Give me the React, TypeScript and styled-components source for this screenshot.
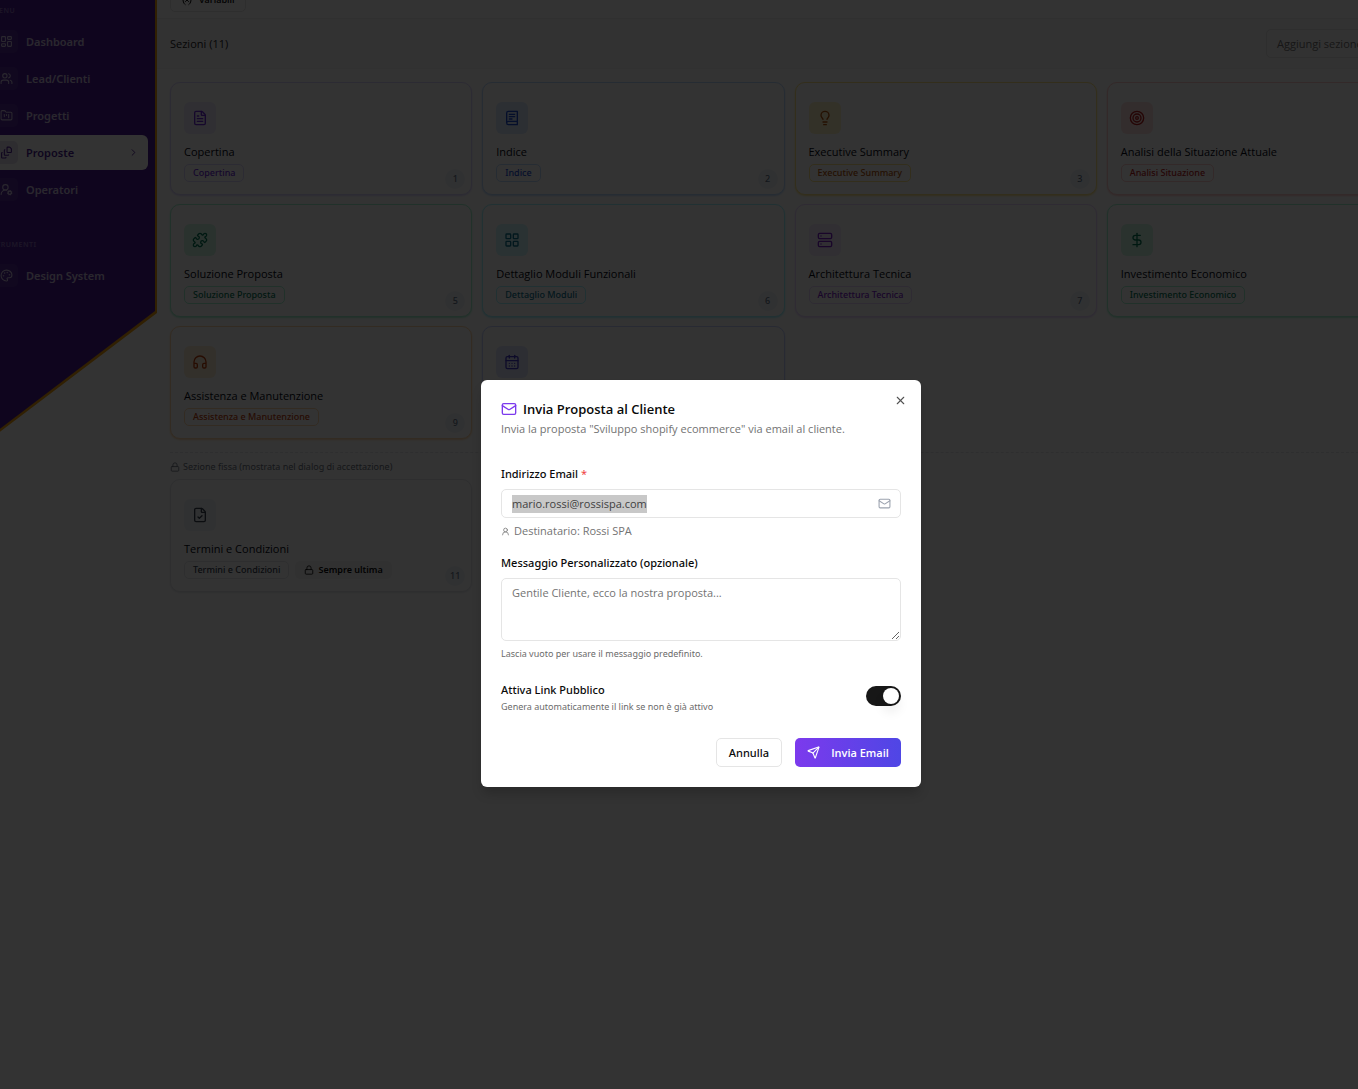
import { useEffect, useRef, useState, type ComponentType } from "react";
import styled, { createGlobalStyle } from "styled-components";
import {
  CalendarDays,
  ChevronRight,
  DollarSign,
  FileCheck,
  FileStack,
  FileText,
  FolderKanban,
  Headphones,
  LayoutDashboard,
  LayoutGrid,
  Lightbulb,
  Lock,
  Mail,
  Palette,
  Puzzle,
  Send,
  Server,
  Target,
  UserRound,
  UserRoundCog,
  Users,
  Variable,
  X,
} from "lucide-react";

const textFont = `"Segoe UI", "Open Sans", "Noto Sans", sans-serif`;
const mediumFont = `"Segoe UI", "Noto Sans", "Open Sans", sans-serif`;

const GlobalStyle = createGlobalStyle`
  *, *::before, *::after { box-sizing: border-box; }
  body {
    margin: 0;
    background: #fff;
    color: #0a0a0a;
    font-family: ${textFont};
    font-size: 11px;
    line-height: 18px;
  }
  button, input, textarea { font: inherit; color: inherit; }
  h2, h3, p, ul { margin: 0; padding: 0; }
`;

interface Tone {
  border: string;
  soft: string;
  icon: string;
  text: string;
}

const tones: Record<string, Tone> = {
  violet: { border: "#ddd6fe", soft: "#ede9fe", icon: "#6d28d9", text: "#6d28d9" },
  blue: { border: "#bfdbfe", soft: "#dbeafe", icon: "#1d4ed8", text: "#1d4ed8" },
  amber: { border: "#fde68a", soft: "#fef3c7", icon: "#b45309", text: "#b45309" },
  red: { border: "#fecaca", soft: "#fee2e2", icon: "#b91c1c", text: "#b91c1c" },
  emerald: { border: "#a7f3d0", soft: "#d1fae5", icon: "#047857", text: "#047857" },
  cyan: { border: "#a5f3fc", soft: "#cffafe", icon: "#0e7490", text: "#0e7490" },
  purple: { border: "#e9d5ff", soft: "#f3e8ff", icon: "#7e22ce", text: "#7e22ce" },
  green: { border: "#a7f3d0", soft: "#d1fae5", icon: "#047857", text: "#047857" },
  orange: { border: "#fed7aa", soft: "#ffedd5", icon: "#c2410c", text: "#c2410c" },
  indigo: { border: "#c7d2fe", soft: "#e0e7ff", icon: "#4338ca", text: "#4338ca" },
  slate: { border: "#e5e7eb", soft: "#f1f5f9", icon: "#374151", text: "#374151" },
};

/* ---------- Shell ---------- */

const Viewport = styled.div`
  height: 100vh;
  overflow: hidden;
`;

const Shell = styled.div`
  position: relative;
  display: flex;
  align-items: flex-start;
  height: calc(100vh + 78px);
  margin: 0 -68px 0 -24px;
`;

const Main = styled.main`
  flex: 1;
  min-width: 0;
`;

/* ---------- Sidebar ---------- */

const SidebarEdge = styled.aside`
  flex: none;
  width: 181px;
  height: 450px;
  padding-right: 2px;
  background: #f59e0b;
  clip-path: polygon(0 0, 100% 0, 100% 313px, 0 100%);
`;

const SidebarBody = styled.nav`
  height: 100%;
  padding: 2px 7px 0 8px;
  background: #4c1d95;
  clip-path: polygon(0 0, 100% 0, 100% 311px, 0 447px);
  font-family: ${mediumFont};
`;

const NavHeading = styled.h3`
  padding-left: 8px;
  font-size: 7px;
  font-weight: 600;
  line-height: 18px;
  letter-spacing: 0.5px;
  color: #8c6cc0;
`;

const NavList = styled.ul`
  display: flex;
  flex-direction: column;
  gap: 2px;
  padding-top: 4px;
  list-style: none;

  & + ${NavHeading} {
    padding-top: 29px;
  }
`;

const NavLink = styled.a<{ $active?: boolean }>`
  display: flex;
  align-items: center;
  gap: 8px;
  height: 35px;
  padding: 0 9px 0 11px;
  border-radius: 6px;
  background: ${(p) => (p.$active ? "#fff" : "transparent")};
  color: ${(p) => (p.$active ? "#4c1d95" : "#cfc3e4")};
  font-size: 11px;
  font-weight: 600;
  text-decoration: none;
`;

const NavIcon = styled.span<{ $active?: boolean }>`
  display: grid;
  place-items: center;
  width: 23px;
  height: 23px;
  border-radius: 5px;
  background: ${(p) => (p.$active ? "#e6e0f0" : "rgba(255, 255, 255, 0.06)")};
`;

const NavText = styled.span`
  flex: 1;
`;

/* ---------- Page header ---------- */

const Tools = styled.div`
  display: flex;
  align-items: flex-end;
  height: 19px;
  padding: 0 17px 6px 13px;
  border-bottom: 1px solid #f0f0f0;
`;

const ToolButton = styled.button`
  display: flex;
  align-items: center;
  gap: 6px;
  height: 24px;
  padding: 0 10px;
  border: 1px solid #e5e5e5;
  border-radius: 5px;
  background: #fff;
  font-size: 9px;
  font-weight: 600;
`;

const SectionBar = styled.div`
  display: flex;
  align-items: center;
  justify-content: space-between;
  height: 50px;
  padding: 0 17px 0 13px;
  border-bottom: 1px solid #f3f4f6;
  background: #f8f8f9;
  color: #262626;
`;

const AddSection = styled.button`
  width: 143px;
  height: 29px;
  padding: 0 10px;
  border: 1px solid #e5e5e5;
  border-radius: 5px;
  background: #fafafa;
  color: #737373;
  text-align: left;
  white-space: nowrap;
`;

/* ---------- Section cards ---------- */

const Content = styled.div`
  padding: 13px 17px 0 13px;
`;

const CardGrid = styled.div`
  display: grid;
  grid-template-columns: repeat(4, minmax(0, 1fr));
  gap: 9px 10px;
`;

const Card = styled.article<{ $tone: Tone }>`
  display: flex;
  align-items: flex-end;
  justify-content: space-between;
  height: 113px;
  padding: 19px 6px 5px 13px;
  border: 1px solid ${(p) => p.$tone.border};
  border-radius: 10px;
  background: #fff;
  box-shadow: 0 1px 2px ${(p) => p.$tone.border};
`;

const CardBody = styled.div`
  align-self: flex-start;
`;

const CardIcon = styled.div<{ $tone: Tone }>`
  display: grid;
  place-items: center;
  width: 32px;
  height: 32px;
  margin-bottom: 9px;
  border-radius: 6px;
  background: ${(p) => p.$tone.soft};
  color: ${(p) => p.$tone.icon};
`;

const CardTitle = styled.h3`
  font-size: 11px;
  font-weight: 500;
  color: #030712;
  white-space: nowrap;
`;

const TagRow = styled.div`
  display: flex;
  gap: 6px;
  padding-top: 3px;
`;

const Tag = styled.span<{ $tone: Tone }>`
  display: flex;
  align-items: center;
  height: 18px;
  padding: 0 8px;
  border: 1px solid ${(p) => p.$tone.border};
  border-radius: 5px;
  color: ${(p) => p.$tone.text};
  font-family: ${mediumFont};
  font-size: 9px;
  font-weight: 500;
  white-space: nowrap;
`;

const LastTag = styled.span`
  display: flex;
  align-items: center;
  gap: 4px;
  height: 18px;
  padding: 0 9px;
  border-radius: 5px;
  background: #f5f5f5;
  color: #0a0a0a;
  font-family: ${mediumFont};
  font-size: 9px;
  font-weight: 600;
`;

const CardNumber = styled.span`
  display: grid;
  place-items: center;
  width: 20px;
  height: 20px;
  border-radius: 50%;
  background: #f1f5f9;
  color: #64748b;
  font-family: ${mediumFont};
  font-size: 9px;
  font-weight: 500;
`;

const FixedGroup = styled.section`
  margin-top: 13px;
  border-top: 1px dashed #e5e7eb;
`;

const FixedNote = styled.p`
  display: flex;
  align-items: center;
  gap: 3px;
  padding: 5px 0 3px;
  color: #6b7280;
  font-family: ${mediumFont};
  font-size: 9px;
`;

/* ---------- Dialog ---------- */

const Overlay = styled.div`
  position: absolute;
  inset: 0;
  display: grid;
  place-items: center;
  background: rgba(0, 0, 0, 0.8);
`;

const Dialog = styled.div`
  position: relative;
  width: 440px;
  padding: 20px;
  border-radius: 6px;
  background: #fff;
  box-shadow: 0 8px 12px -2px rgba(0, 0, 0, 0.2);
`;

const CloseButton = styled.button`
  position: absolute;
  top: 12px;
  right: 13px;
  display: grid;
  place-items: center;
  width: 16px;
  height: 16px;
  padding: 0;
  border: 0;
  background: none;
  color: #525252;
`;

const DialogTitle = styled.h2`
  display: flex;
  align-items: center;
  gap: 6px;
  font-size: 13px;
  font-weight: 600;
  line-height: 18px;

  svg {
    color: #7c3aed;
  }
`;

const DialogText = styled.p`
  padding-top: 2px;
  color: #737373;
`;

const Form = styled.form`
  display: flex;
  flex-direction: column;
  gap: 14px;
  padding-top: 27px;
`;

const Field = styled.div`
  display: flex;
  flex-direction: column;
`;

const Label = styled.label`
  font-family: ${mediumFont};
  font-weight: 500;
`;

const Required = styled.span`
  color: #ef4444;
  font-weight: 400;
`;

const InputFrame = styled.div`
  display: flex;
  align-items: center;
  height: 29px;
  margin: 6px 0 4px;
  padding: 0 9px 0 10px;
  border: 1px solid #e5e5e5;
  border-radius: 5px;
  color: #9ca3af;
`;

const TextInput = styled.input`
  flex: 1;
  min-width: 0;
  padding: 0;
  border: 0;
  outline: 0;
  background: none;
  color: #404040;

  &::selection {
    background: #c8c8c8;
    color: #404040;
  }
`;

const TextArea = styled.textarea`
  display: block;
  height: 63px;
  margin: 6px 0 4px;
  padding: 5px 10px;
  border: 1px solid #e5e5e5;
  border-radius: 5px;
  resize: vertical;
  outline: 0;

  &::placeholder {
    color: #737373;
  }
`;

const Recipient = styled.p`
  display: flex;
  align-items: center;
  gap: 4px;
  color: #737373;
`;

const Hint = styled.p<{ $tight?: boolean }>`
  color: #6b6b6b;
  font-family: ${mediumFont};
  font-size: 9px;
  line-height: ${(p) => (p.$tight ? "16px" : "18px")};
`;

const SwitchRow = styled.div`
  display: flex;
  align-items: flex-start;
  justify-content: space-between;
  padding-top: 4px;
`;

const Switch = styled.input`
  appearance: none;
  display: flex;
  align-items: center;
  width: 35px;
  height: 20px;
  margin: 5px 0 0;
  padding: 0 2px;
  border-radius: 10px;
  background: #a3a3a3;

  &::before {
    content: "";
    width: 16px;
    height: 16px;
    border-radius: 50%;
    background: #fff;
    box-shadow: 0 8px 12px rgba(0, 0, 0, 0.08);
  }

  &:checked {
    justify-content: flex-end;
    background: #171717;
  }
`;

const Actions = styled.div`
  display: flex;
  justify-content: flex-end;
  gap: 13px;
  padding-top: 9px;
`;

const Button = styled.button<{ $primary?: boolean }>`
  display: flex;
  align-items: center;
  justify-content: center;
  gap: 11px;
  height: 29px;
  min-width: ${(p) => (p.$primary ? "106px" : "66px")};
  padding: 0 12px;
  border: ${(p) => (p.$primary ? "0" : "1px solid #e5e5e5")};
  border-radius: 5px;
  background: ${(p) => (p.$primary ? "linear-gradient(90deg, #7c3aed, #4f46e5)" : "#fff")};
  color: ${(p) => (p.$primary ? "#fff" : "#0a0a0a")};
  font-family: ${(p) => (p.$primary ? textFont : mediumFont)};
  font-weight: ${(p) => (p.$primary ? 600 : 500)};
  white-space: nowrap;
`;

/* ---------- Data ---------- */

type IconType = ComponentType<{ size?: number }>;

interface NavEntry {
  label: string;
  icon: IconType;
  active?: boolean;
}

interface Section {
  title: string;
  tag: string;
  number: number;
  tone: string;
  icon: IconType;
  last?: boolean;
}

function IndexBook({ size = 24 }: { size?: number }) {
  return (
    <svg
      width={size}
      height={size}
      viewBox="0 0 24 24"
      fill="none"
      stroke="currentColor"
      strokeWidth="2"
      strokeLinecap="round"
      strokeLinejoin="round"
      aria-hidden="true"
    >
      <path d="M4 19.5v-15A2.5 2.5 0 0 1 6.5 2H20v20H6.5a2.5 2.5 0 0 1 0-5H20" />
      <path d="M8 6.5h8M8 10h8M8 13.5h4" />
    </svg>
  );
}

const menu: NavEntry[] = [
  { label: "Dashboard", icon: LayoutDashboard },
  { label: "Lead/Clienti", icon: Users },
  { label: "Progetti", icon: FolderKanban },
  { label: "Proposte", icon: FileStack, active: true },
  { label: "Operatori", icon: UserRoundCog },
];

const strumenti: NavEntry[] = [{ label: "Design System", icon: Palette }];

const sections: Section[] = [
  { title: "Copertina", tag: "Copertina", number: 1, tone: "violet", icon: FileText },
  { title: "Indice", tag: "Indice", number: 2, tone: "blue", icon: IndexBook },
  { title: "Executive Summary", tag: "Executive Summary", number: 3, tone: "amber", icon: Lightbulb },
  { title: "Analisi della Situazione Attuale", tag: "Analisi Situazione", number: 4, tone: "red", icon: Target },
  { title: "Soluzione Proposta", tag: "Soluzione Proposta", number: 5, tone: "emerald", icon: Puzzle },
  { title: "Dettaglio Moduli Funzionali", tag: "Dettaglio Moduli", number: 6, tone: "cyan", icon: LayoutGrid },
  { title: "Architettura Tecnica", tag: "Architettura Tecnica", number: 7, tone: "purple", icon: Server },
  { title: "Investimento Economico", tag: "Investimento Economico", number: 8, tone: "green", icon: DollarSign },
  { title: "Assistenza e Manutenzione", tag: "Assistenza e Manutenzione", number: 9, tone: "orange", icon: Headphones },
  { title: "Timeline", tag: "Timeline", number: 10, tone: "indigo", icon: CalendarDays },
];

const terms: Section = {
  title: "Termini e Condizioni",
  tag: "Termini e Condizioni",
  number: 11,
  tone: "slate",
  icon: FileCheck,
  last: true,
};

/* ---------- Parts ---------- */

function NavGroup({ entries }: { entries: NavEntry[] }) {
  return (
    <NavList>
      {entries.map(({ label, icon: Icon, active }) => (
        <li key={label}>
          <NavLink href="#" $active={active}>
            <NavIcon $active={active}>
              <Icon size={13} />
            </NavIcon>
            <NavText>{label}</NavText>
            {active && <ChevronRight size={11} />}
          </NavLink>
        </li>
      ))}
    </NavList>
  );
}

function SectionCard({ section }: { section: Section }) {
  const tone = tones[section.tone];
  const Icon = section.icon;
  return (
    <Card $tone={tone}>
      <CardBody>
        <CardIcon $tone={tone}>
          <Icon size={16} />
        </CardIcon>
        <CardTitle>{section.title}</CardTitle>
        <TagRow>
          <Tag $tone={tone}>{section.tag}</Tag>
          {section.last && (
            <LastTag>
              <Lock size={10} />
              Sempre ultima
            </LastTag>
          )}
        </TagRow>
      </CardBody>
      <CardNumber>{section.number}</CardNumber>
    </Card>
  );
}

function SendDialog() {
  const emailRef = useRef<HTMLInputElement>(null);
  const [email, setEmail] = useState("mario.rossi@rossispa.com");
  const [publicLink, setPublicLink] = useState(true);

  useEffect(() => {
    emailRef.current?.focus();
    emailRef.current?.select();
  }, []);

  return (
    <Dialog role="dialog" aria-modal="true" aria-labelledby="dialog-title">
      <DialogTitle id="dialog-title">
        <Mail size={16} />
        Invia Proposta al Cliente
      </DialogTitle>
      <DialogText>Invia la proposta "Sviluppo shopify ecommerce" via email al cliente.</DialogText>
      <CloseButton type="button" aria-label="Chiudi">
        <X size={13} />
      </CloseButton>
      <Form onSubmit={(e) => e.preventDefault()}>
        <Field>
          <Label htmlFor="email">
            Indirizzo Email <Required>*</Required>
          </Label>
          <InputFrame>
            <TextInput
              id="email"
              ref={emailRef}
              type="text"
              inputMode="email"
              value={email}
              onChange={(e) => setEmail(e.target.value)}
            />
            <Mail size={13} />
          </InputFrame>
          <Recipient>
            <UserRound size={9} />
            Destinatario: Rossi SPA
          </Recipient>
        </Field>
        <Field>
          <Label htmlFor="message">Messaggio Personalizzato (opzionale)</Label>
          <TextArea id="message" placeholder="Gentile Cliente, ecco la nostra proposta..." />
          <Hint>Lascia vuoto per usare il messaggio predefinito.</Hint>
        </Field>
        <SwitchRow>
          <div>
            <Label htmlFor="public-link">Attiva Link Pubblico</Label>
            <Hint $tight>Genera automaticamente il link se non è già attivo</Hint>
          </div>
          <Switch
            id="public-link"
            type="checkbox"
            role="switch"
            checked={publicLink}
            onChange={(e) => setPublicLink(e.target.checked)}
          />
        </SwitchRow>
        <Actions>
          <Button type="button">Annulla</Button>
          <Button type="submit" $primary>
            <Send size={13} />
            Invia Email
          </Button>
        </Actions>
      </Form>
    </Dialog>
  );
}

export default function App() {
  return (
    <Viewport>
      <GlobalStyle />
      <Shell>
        <SidebarEdge>
          <SidebarBody>
            <NavHeading>MENU</NavHeading>
            <NavGroup entries={menu} />
            <NavHeading>STRUMENTI</NavHeading>
            <NavGroup entries={strumenti} />
          </SidebarBody>
        </SidebarEdge>
        <Main>
          <Tools>
            <ToolButton type="button">
              <Variable size={12} />
              Variabili
            </ToolButton>
          </Tools>
          <SectionBar>
            <span>Sezioni (11)</span>
            <AddSection type="button">Aggiungi sezione...</AddSection>
          </SectionBar>
          <Content>
            <CardGrid>
              {sections.map((section) => (
                <SectionCard key={section.number} section={section} />
              ))}
            </CardGrid>
            <FixedGroup>
              <FixedNote>
                <Lock size={10} />
                Sezione fissa (mostrata nel dialog di accettazione)
              </FixedNote>
              <CardGrid>
                <SectionCard section={terms} />
              </CardGrid>
            </FixedGroup>
          </Content>
        </Main>
        <Overlay>
          <SendDialog />
        </Overlay>
      </Shell>
    </Viewport>
  );
}
